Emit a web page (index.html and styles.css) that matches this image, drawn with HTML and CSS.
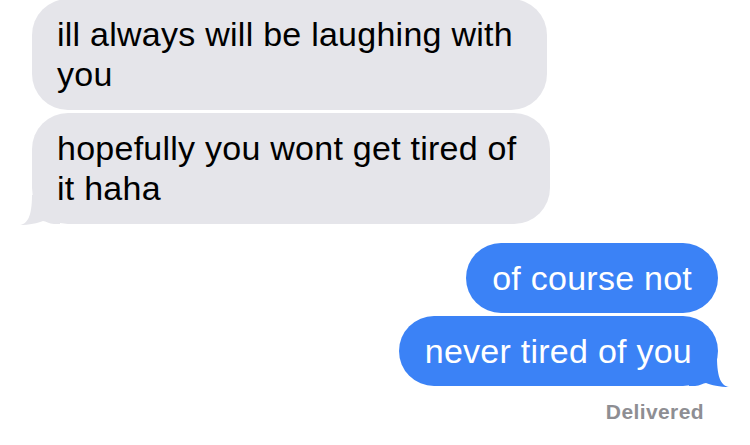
FILE: index.html
```html
<!DOCTYPE html>
<html lang="en">

<head>
    <meta charset="UTF-8">
    <meta content="width=device-width, initial-scale=1.0" name="viewport">
    <title>Messages</title>
    <link rel="stylesheet" href="styles.css">
</head>

<body>
<div class="thread">
    <div class="group them">
        <div class="bubble">ill always will be laughing with<br>you</div>
        <div class="bubble">hopefully you wont get tired of<br>it haha
            <svg class="tail" width="40" height="30" viewBox="0 0 40 30">
                <path d="M0 30C7 29 12 22 12 0L40 0L40 29L34 29C29 29 26 26 23 26C18 28 9 30 0 30Z"/>
            </svg>
        </div>
    </div>
    <div class="group me">
        <div class="bubble">of course not</div>
        <div class="bubble">never tired of you
            <svg class="tail" width="40" height="30" viewBox="0 0 40 30">
                <path d="M0 30C7 29 12 22 12 0L40 0L40 29L34 29C29 29 26 26 23 26C18 28 9 30 0 30Z"/>
            </svg>
        </div>
        <div class="status">Delivered</div>
    </div>
</div>
</body>

</html>
```
FILE: styles.css
```css
html, body {
    height: 100%;
    width: 100%;
    margin: 0;
    padding: 0;
    overflow: hidden;
    background: #fff;
}

.thread {
    display: flex;
    flex-direction: column;
    gap: 19px;
    margin-top: -1px;
    padding: 0 32px;
    font-family: "Liberation Sans", Arial, sans-serif;
    font-size: 34px;
    line-height: 40px;
    letter-spacing: 0.25px;
}

.group {
    display: flex;
    flex-direction: column;
    gap: 3px;
}

.them {
    align-items: flex-start;
}

.me {
    align-items: flex-end;
}

.bubble {
    position: relative;
    isolation: isolate;
    border-radius: 36px;
    white-space: nowrap;
}

.them .bubble {
    background: #e5e5ea;
    color: #000;
    padding: 15px 34px 16px 25px;
}

.me .bubble {
    background: #3b82f6;
    color: #fff;
    padding: 15px 26px;
}

/* the little hook under the last bubble of a group, kept behind the text */
.tail {
    position: absolute;
    bottom: -1px;
    z-index: -1;
}

.them .tail {
    left: -12px;
    fill: #e5e5ea;
}

.me .tail {
    right: -11px;
    fill: #3b82f6;
    transform: scaleX(-1);
}

.status {
    margin: 10px 14px 0 0;
    font-size: 21px;
    line-height: 26px;
    font-weight: bold;
    letter-spacing: 0.4px;
    color: #8e8e93;
}
```
